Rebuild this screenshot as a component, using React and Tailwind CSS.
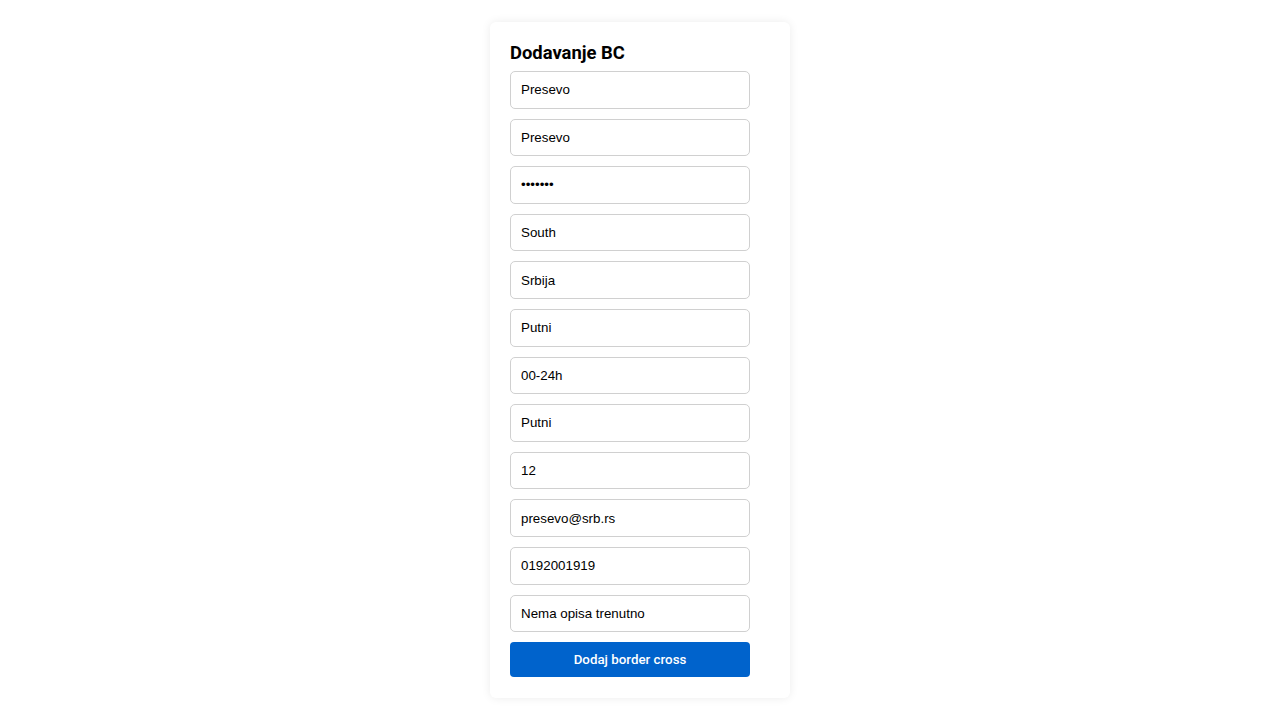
const fields = [
  { value: 'Presevo', type: 'text' },
  { value: 'Presevo', type: 'text' },
  { value: 'presevo', type: 'password' },
  { value: 'South', type: 'text' },
  { value: 'Srbija', type: 'text' },
  { value: 'Putni', type: 'text' },
  { value: '00-24h', type: 'text' },
  { value: 'Putni', type: 'text' },
  { value: '12', type: 'text' },
  { value: 'presevo@srb.rs', type: 'text' },
  { value: '0192001919', type: 'text' },
  { value: 'Nema opisa trenutno', type: 'text' },
];

export default function App() {
  return (
    <div className="min-h-[720px] bg-white pt-[22px] flex justify-center">
      <div className="w-[300px] h-[676px] rounded-md bg-white px-5 pt-5 shadow-[0_0_10px_rgba(0,0,0,0.08)]">
        <h2 className="font-['Roboto',sans-serif] text-[18.4px] font-bold leading-[21px] text-black mb-2">
          Dodavanje BC
        </h2>
        <form onSubmit={(e) => e.preventDefault()}>
          {fields.map((field, i) => (
            <input
              key={i}
              type={field.type}
              defaultValue={field.value}
              className="mb-[10px] block h-[37.6px] w-[240px] rounded-[5px] border border-[#d0d0d0] bg-white px-[10px] font-['Liberation_Sans',Arial,sans-serif] text-[13.33px] text-black outline-none"
            />
          ))}
          <button
            type="submit"
            className="mt-[1.5px] block h-[35px] w-[240px] rounded-[4px] bg-[#0063cc] font-['Roboto',sans-serif] text-[13.33px] font-medium text-white"
          >
            Dodaj border cross
          </button>
        </form>
      </div>
    </div>
  );
}
